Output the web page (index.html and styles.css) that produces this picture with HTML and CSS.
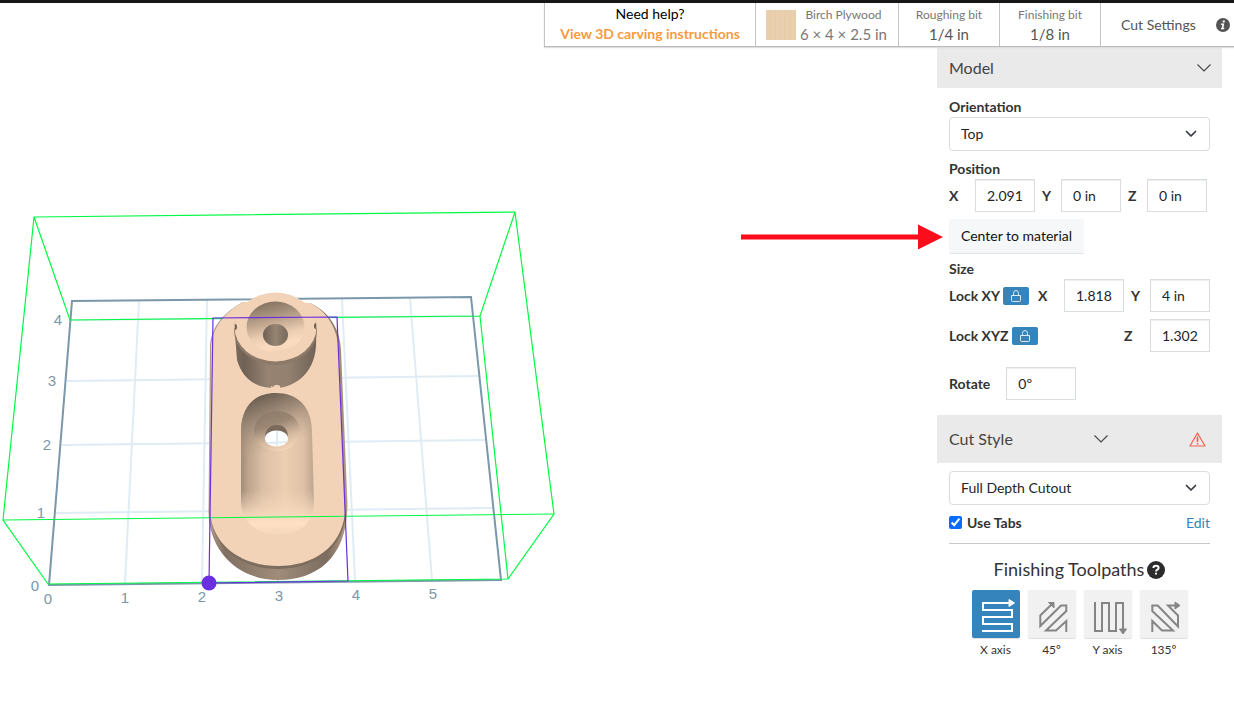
FILE: index.html
```html
<!DOCTYPE html>
<html lang="en">
<head>
<meta charset="utf-8">
<title>3D carving</title>
<link rel="stylesheet" href="styles.css">
</head>
<body>
<header class="topbar">
  <div class="bar">
    <div class="cell help">
      <span>Need help?</span>
      <a href="#instructions">View 3D carving instructions</a>
    </div>
    <button class="cell material" type="button">
      <span class="swatch"></span>
      <span class="stack"><span class="small">Birch Plywood</span><span class="value muted">6 × 4 × 2.5 in</span></span>
    </button>
    <button class="cell bit" type="button"><span class="small">Roughing bit</span><span class="value">1/4 in</span></button>
    <button class="cell bit" type="button"><span class="small">Finishing bit</span><span class="value">1/8 in</span></button>
    <div class="cell settings">
      <button class="plain" type="button">Cut Settings</button>
      <button class="plain icon" type="button" aria-label="About cut settings">
        <svg width="14" height="14" viewBox="0 0 14 14"><circle cx="7" cy="7" r="7" fill="#555"/><path d="M6.9 2.6h2L8.6 4.4h-2zM5 5.5h3.2L7.4 9.8h1l-.3 1.4H4.9l.2-1.2h.6l.6-3.2H4.8z" fill="#fff"/></svg>
      </button>
    </div>
  </div>
</header>

<main class="workspace">
  <section class="stage" aria-label="3D preview">
    <svg class="scene" width="560" height="420" viewBox="0 200 560 420" role="img" aria-label="Model in material">
      <defs>
        <linearGradient id="side" x1="0" x2="1"><stop offset="0" stop-color="#b59c86"/><stop offset=".12" stop-color="#7f7062"/><stop offset=".5" stop-color="#a08c79"/><stop offset=".85" stop-color="#7c6d60"/><stop offset="1" stop-color="#b59c86"/></linearGradient>
        <linearGradient id="barrel" x1="0" x2="1"><stop offset="0" stop-color="#7c6c5f"/><stop offset=".12" stop-color="#6f6155"/><stop offset=".4" stop-color="#968371"/><stop offset=".65" stop-color="#948170"/><stop offset="1" stop-color="#6f6257"/></linearGradient>
        <linearGradient id="cone" x1=".35" y1="0" x2=".6" y2="1"><stop offset="0" stop-color="#83725f"/><stop offset=".22" stop-color="#a28d79"/><stop offset=".45" stop-color="#c9ae96"/><stop offset=".65" stop-color="#ecceb2"/><stop offset=".85" stop-color="#fbdcc0"/><stop offset="1" stop-color="#f2d3b8"/></linearGradient>
        <linearGradient id="hole" x1="0" x2="1"><stop offset="0" stop-color="#6f6155"/><stop offset=".5" stop-color="#968371"/><stop offset="1" stop-color="#78695b"/></linearGradient>
        <linearGradient id="pocket" x1="0" x2="1"><stop offset="0" stop-color="#a18c79"/><stop offset=".1" stop-color="#bda48d"/><stop offset=".3" stop-color="#dcc0a6"/><stop offset=".6" stop-color="#ecceb3"/><stop offset=".85" stop-color="#e0c2a8"/><stop offset="1" stop-color="#bea58e"/></linearGradient>
        <linearGradient id="pocketTop" x1=".4" y1="0" x2=".6" y2="1"><stop offset="0" stop-color="#6f6153"/><stop offset=".14" stop-color="#948170" stop-opacity=".9"/><stop offset=".4" stop-color="#b89f88" stop-opacity="0"/></linearGradient>
        <linearGradient id="glow" x1="0" y1="0" x2="0" y2="1"><stop offset="0" stop-color="#f5d7bb" stop-opacity="0"/><stop offset=".5" stop-color="#f8dabe" stop-opacity=".8"/><stop offset=".75" stop-color="#ffe0c4"/><stop offset="1" stop-color="#f4d6ba"/></linearGradient>
        <linearGradient id="sink" x1=".2" y1="0" x2=".6" y2="1"><stop offset="0" stop-color="#8b7968"/><stop offset=".35" stop-color="#9a8673"/><stop offset=".7" stop-color="#d5b9a0"/><stop offset="1" stop-color="#f4d5b9"/></linearGradient>
      </defs>
      <g fill="none" stroke="#dfecf4" stroke-width="2">
        <path d="M139 300 125 583M207 300 202 582M274 299 278 581M342 299 355 580M410 298 432 580"/>
        <path d="M71 320 473 316M67 381 479 376M62 445 485 440M56 513 493 508"/>
      </g>
      <path d="M72 301 471 297 501 580 49 585Z" fill="none" stroke="#7b97aa" stroke-width="2"/>
      <path class="bounds" d="M34 217 515 212 554 514 508 579 48 584 3 520ZM34 217 70 320 480 316 515 212M480 316 508 579"/>

      <path d="M210 345C212 324 227 311 243 302L310 303C326 310 340 326 341 350L347.500 505C347 558 317 580 278 580S209 552 208.500 512Z" fill="url(#side)"/>
      <path d="M210 508C211 550 243 569 278 569S345 550 346 510Z" fill="#7d6d5e"/>
      <path d="M211 345C213 325 227 311 243 302L310 303C327 311 337 328 339 350L345 512C342 548 312 566 278 566S213 548 210 512Z" fill="#f2d3b8"/>

      <path d="M241 432C241 406 255 393 276 393S312 406 312 432L314 502C313 523 298 535 279 535S242 522 241 502Z" fill="url(#pocket)"/>
      <path d="M241 432C241 406 255 393 276 393S312 406 312 432L314 502C313 523 298 535 279 535S242 522 241 502Z" fill="url(#pocketTop)"/>
      <path d="M241 502C241 522 258 535 279 535S313 523 314 502L313 490H241Z" fill="url(#glow)"/>
      <ellipse cx="277" cy="431" rx="23" ry="20" fill="url(#sink)"/>
      <path d="M265 438C265 429 270 425 277 425S288 429 288 438Z" fill="#7a6a5c"/>
      <ellipse cx="276.500" cy="438.500" rx="11.500" ry="8" fill="#fff"/>
      <path d="M277 431V446M267 443 286 442" stroke="#dfecf4" stroke-width="2"/>

      <path d="M234.500 328 237 360C243 381 258 388 275 388S314 376 316 346L316.500 326Z" fill="url(#barrel)"/>
      <ellipse cx="275.500" cy="330" rx="41.500" ry="35" fill="#8c7967"/>
      <ellipse cx="275.500" cy="327" rx="41" ry="34.500" fill="#f2d3b8"/>
      <ellipse cx="275.500" cy="327" rx="29" ry="25.500" fill="url(#cone)"/>
      <ellipse cx="275.500" cy="335" rx="12.500" ry="11" fill="url(#hole)"/>
      <path d="M235 324a2 3 0 1 1 0 6zM316 323a2 3 0 1 0 0 6z" fill="#6f6155"/>
      <path d="M271 389V386L273 387 275 385H278L280 386V389Z" fill="#f2d3b8"/>

      <path class="bounds" d="M3 520 554 514"/>
      <path d="M213 318 337 317 348 581 209 583Z" fill="none" stroke="#6a2fe0" stroke-width="1.200"/>
      <circle cx="209" cy="583" r="7.500" fill="#6a2fe0"/>
      <g class="ruler">
        <text x="58" y="325">4</text><text x="52" y="386">3</text><text x="47" y="450">2</text><text x="41" y="518">1</text><text x="35" y="591">0</text>
        <text x="48" y="604">0</text><text x="125" y="603">1</text><text x="202" y="602">2</text><text x="279" y="601">3</text><text x="356" y="600">4</text><text x="433" y="599">5</text>
      </g>
    </svg>
  </section>

  <aside class="panel">
    <h2 class="section"><button type="button">Model
      <svg width="14" height="8" viewBox="0 0 14 8"><path d="M.5.500 7 7 13.500.500" fill="none" stroke="#444" stroke-width="1.100"/></svg></button></h2>
    <div class="group model">
      <label class="title" for="orientation">Orientation</label>
      <div class="pick">
        <select id="orientation"><option>Top</option></select>
        <svg class="caret" width="12" height="8" viewBox="0 0 12 8"><path d="M1.500 1.500 6 6 10.500 1.500" fill="none" stroke="#343a40" stroke-width="1.700" stroke-linecap="round" stroke-linejoin="round"/></svg>
      </div>
      <div class="title position">Position</div>
      <div class="row">
        <label class="axis" for="px">X</label><input id="px" type="text" value="2.091">
        <label class="axis next" for="py">Y</label><input id="py" type="text" value="0 in">
        <label class="axis next" for="pz">Z</label><input id="pz" type="text" value="0 in">
      </div>
      <div class="center-wrap">
        <button class="center" type="button">Center to material</button>
        <svg class="pointer" width="202" height="26" viewBox="0 0 202 26" aria-hidden="true"><path d="M0 10.500H177V0.500L202 13 177 25.500V15.500H0Z" fill="#fc0d1b"/></svg>
      </div>
      <div class="title size">Size</div>
      <div class="row spread">
        <span class="title">Lock XY</span>
        <button class="lock" type="button" aria-label="Lock XY" aria-pressed="true"><svg width="12" height="14" viewBox="0 0 12 14"><path d="M1.500 6.500h9v5q0 1-1 1h-7q-1 0-1-1zM3.500 6.500v-2q0-3 2.500-3t2.500 3v2" fill="none" stroke="#d9ecfa"/></svg></button>
        <label class="axis first" for="sx">X</label><input id="sx" type="text" value="1.818">
        <label class="axis next" for="sy">Y</label><input id="sy" type="text" value="4 in">
      </div>
      <div class="row spread second">
        <span class="title">Lock XYZ</span>
        <button class="lock" type="button" aria-label="Lock XYZ" aria-pressed="true"><svg width="12" height="14" viewBox="0 0 12 14"><path d="M1.500 6.500h9v5q0 1-1 1h-7q-1 0-1-1zM3.500 6.500v-2q0-3 2.500-3t2.500 3v2" fill="none" stroke="#d9ecfa"/></svg></button>
        <label class="axis first" for="sz">Z</label><input id="sz" type="text" value="1.302">
      </div>
      <div class="row rotate">
        <label class="title" for="rot">Rotate</label><input class="wide" id="rot" type="text" value="0º">
      </div>
    </div>

    <h2 class="section tall"><button type="button">Cut Style
      <svg width="14" height="8" viewBox="0 0 14 8"><path d="M.5.500 7 7 13.500.500" fill="none" stroke="#444" stroke-width="1.100"/></svg>
      <svg width="17" height="15" viewBox="0 0 17 15"><path d="M8.500 1 16 14H1Z" fill="none" stroke="#f2604f" stroke-width="1.200" stroke-linejoin="round"/><path d="M8.500 4.500V10M8.500 11V12.500" stroke="#f2604f" stroke-width="1.600"/></svg></button></h2>
    <div class="group">
      <div class="pick">
        <select aria-label="Cut style"><option>Full Depth Cutout</option></select>
        <svg class="caret" width="12" height="8" viewBox="0 0 12 8"><path d="M1.500 1.500 6 6 10.500 1.500" fill="none" stroke="#343a40" stroke-width="1.700" stroke-linecap="round" stroke-linejoin="round"/></svg>
      </div>
      <div class="tabs">
        <input id="tabs" type="checkbox" checked><label class="title" for="tabs">Use Tabs</label>
        <a href="#tabs-edit">Edit</a>
      </div>
      <h3 class="finish">Finishing Toolpaths
        <button class="plain icon" type="button" aria-label="About finishing toolpaths"><svg width="18" height="18" viewBox="0 0 18 18"><circle cx="9" cy="9" r="9" fill="#2b2b2b"/><path d="M6.400 7Q6.400 4.800 9 4.800T11.600 6.900Q11.600 8 10.300 8.700 9 9.400 9 10.600" fill="none" stroke="#fff" stroke-width="1.900"/><path d="M8 11.700h2v1.900H8z" fill="#fff"/></svg></button>
      </h3>
      <div class="paths">
        <button type="button" aria-pressed="true"><svg width="48" height="48" viewBox="0 0 48 48"><path d="M10 41H40V34H11V27H40V20H11V13H38"/><path class="head" d="M37 9.500 42.500 13 37 16.500Z"/></svg><span>X axis</span></button>
        <button type="button"><svg width="48" height="48" viewBox="0 0 48 48"><path d="M38.300 42V31L28 40.500H18L38.300 21V15.500H33L12.300 36V25.500L24 14"/><path class="head" d="M20.500 12.500H26V18Z"/></svg><span>45º</span></button>
        <button type="button"><svg width="48" height="48" viewBox="0 0 48 48"><path d="M11 12V41H18V13H25V41H32V13H39V40"/><path class="head" d="M35.500 39H42.500L39 44Z"/></svg><span>Y axis</span></button>
        <button type="button"><svg width="48" height="48" viewBox="0 0 48 48"><path d="M12.300 42V31L22 40.500H33L12.300 21V15.500H17.700L38 36.500V25.500L28 15.500H36"/><path class="head" d="M35 12 40 15.500 35 19Z"/></svg><span>135º</span></button>
      </div>
    </div>
  </aside>
</main>
</body>
</html>
```

FILE: styles.css
```css
* { box-sizing: border-box; }
body { margin: 0; background: #fff; color: #333; font: 14px/20px Lato, "Liberation Sans", sans-serif; }
button, input, select { font: inherit; color: inherit; }
button { border: 0; background: none; padding: 0; cursor: pointer; }
svg { display: block; flex: none; }
a { color: #3483ba; text-decoration: none; }

.topbar { border-top: 3px solid #171616; display: flex; justify-content: flex-end; }
.bar { display: flex; height: 44px; background: #fff; border-bottom: 1px solid #bbb; box-shadow: 0 1px 1px #ddd; position: relative; }
.cell { border-left: 1px solid #c4c4c4; display: flex; flex-direction: column; align-items: center; color: #555; }
.help { width: 211px; padding-top: 1px; color: #000; }
.help a { color: #f79a42; font-weight: 700; }
.material { width: 143px; flex-direction: row; gap: 4px; padding-left: 10px; }
.stack { display: flex; flex-direction: column; align-items: center; height: 100%; }
.swatch { width: 30px; height: 30px; background: repeating-linear-gradient(90deg, #e9cfad 0 3px, #e8cdab 3px 5px); }
.small { font-size: 12px; line-height: 16px; padding-top: 4px; color: #777; }
.value { font-size: 15px; line-height: 20px; padding-top: 1px; color: #555; }
.value.muted { color: #777; }
.small, .value { box-sizing: content-box; white-space: nowrap; }
.bit { width: 101px; }
.settings { width: 134px; flex-direction: row; justify-content: space-between; padding: 0 4px 0 20px; }
.plain { display: inline-flex; }

.workspace { display: flex; align-items: flex-start; padding-right: 12px; }
.stage { flex: 1; min-width: 0; padding-top: 153px; }
.bounds { fill: none; stroke: #00fa43; stroke-width: 1.2; }
.ruler { font: 15px "Liberation Sans", Arial, sans-serif; fill: #7b97aa; text-anchor: middle; }

.panel { width: 285px; flex: none; }
.section { margin: 0; font-size: 16px; font-weight: 400; background: #eaeaea; }
.section button { width: 100%; height: 41px; padding: 0 11px 0 12px; display: flex; align-items: center; justify-content: space-between; color: #444; }
.section.tall button { height: 48px; padding: 0 16px 0 12px; }
.group { padding: 8px 12px; display: flex; flex-direction: column; }
.model { padding: 9px 12px 15px; }
.title { font-weight: 700; }
.pick { position: relative; display: flex; }
.pick select { width: 100%; height: 34px; padding: 0 11px; appearance: none; border: 1px solid #d8dde1; border-radius: 4px; background: #fff; color: #212529; }
.caret { position: absolute; right: 13px; top: 13px; pointer-events: none; }
.position { margin-top: 8px; }
.row { display: flex; align-items: center; }
.axis { width: 26px; font-weight: 700; }
.axis.next { padding-left: 7px; }
.axis.first { margin-left: auto; }
.row input { width: 60px; height: 33px; padding: 0 0 0 11px; border: 1px solid #d8dde1; border-radius: 0; background: #fff; box-shadow: inset 0 1px 1px #eee; color: #212529; }
.row input.wide { width: 70px; margin-left: 16px; }
.center-wrap { position: relative; align-self: flex-start; margin: 7px 0 5px; }
.center { display: block; height: 35px; padding: 0 12px; background: #f6f7f9; border-bottom: 1px solid #e0e3e6; border-radius: 2px; color: #111; }
.pointer { position: absolute; right: 100%; margin-right: 6px; top: 5px; }
.lock { width: 26px; height: 18px; margin-left: 3px; display: flex; align-items: center; justify-content: center; background: #3584bc; border-radius: 2px; }
.second { margin-top: 7px; }
.rotate { margin-top: 15px; }
.tabs { display: flex; align-items: center; padding: 8px 0 10px; border-bottom: 1px solid #c8c8c8; }
.tabs input { width: 13px; height: 13px; margin: 0 5px 2px 0; accent-color: #0a6cff; }
.tabs a { margin-left: auto; }
.finish { margin: 13px 0 8px; display: flex; gap: 3px; align-items: center; justify-content: center; font-size: 18px; line-height: 25px; font-weight: 400; }
.paths { display: flex; justify-content: center; gap: 8px; }
.paths button { width: 48px; font-size: 12px; line-height: 16px; }
.paths svg { background: #f1f1f1; border-radius: 2px; box-shadow: 0 1px 1px #ddd; margin-bottom: 4px; fill: none; stroke: #858585; stroke-width: 2; }
.paths .head { fill: #858585; stroke-width: 1; }
.paths [aria-pressed="true"] svg { background: #3584bc; stroke: #fff; }
.paths [aria-pressed="true"] .head { fill: #fff; }
```
